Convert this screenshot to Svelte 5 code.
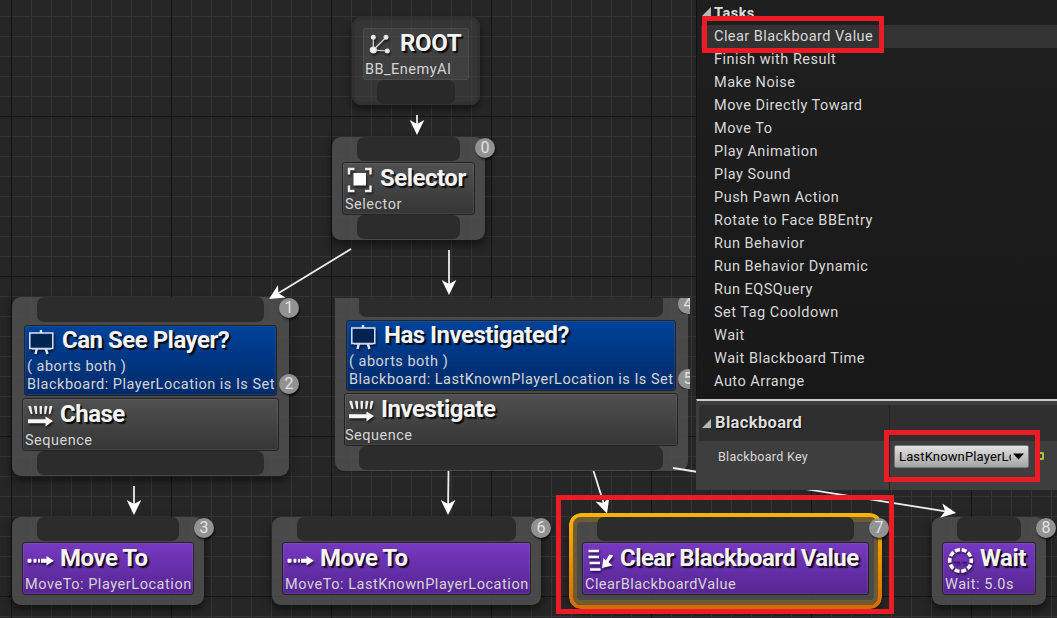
<script>
  const nodes = [
    { kind: 'entry', x: 352, y: 17, w: 128, top: 0, bottom: 24, title: 'ROOT', sub: 'BB_EnemyAI', icon: 'root', badges: [] },
    { kind: 'grey', x: 332, y: 137, w: 153, top: 24, bottom: 24, title: 'Selector', sub: 'Selector', icon: 'selector', badges: [['0', 11]] },
    { kind: 'grey', x: 12, y: 297, w: 277, top: 25, bottom: 24, title: 'Chase', sub: 'Sequence', icon: 'sequence', deco: { title: 'Can See Player?', key: 'PlayerLocation' }, badges: [['1', 11], ['2', 87]] },
    { kind: 'grey cut', x: 335, y: 298, w: 353, top: 19, bottom: 24, title: 'Investigate', sub: 'Sequence', icon: 'sequence', deco: { title: 'Has Investigated?', key: 'LastKnownPlayerLocation' }, badges: [['4', 6], ['5', 81]] },
    { kind: 'task', x: 12, y: 517, w: 192, top: 24, bottom: 0, title: 'Move To', sub: 'MoveTo: PlayerLocation', icon: 'move', badges: [['3', 11]] },
    { kind: 'task', x: 272, y: 517, w: 269, top: 24, bottom: 0, title: 'Move To', sub: 'MoveTo: LastKnownPlayerLocation', icon: 'move', badges: [['6', 11]] },
    { kind: 'task selected', x: 572, y: 517, w: 307, top: 24, bottom: 0, title: 'Clear Blackboard Value', sub: 'ClearBlackboardValue', icon: 'clear', badges: [['7', 11]] },
    { kind: 'task', x: 932, y: 517, w: 114, top: 24, bottom: 0, title: 'Wait', sub: 'Wait: 5.0s', icon: 'wait', badges: [['8', 11]] }
  ];

  const links = [
    [417, 115, 417, 135],
    [351, 249, 269, 299],
    [449, 250, 449, 295],
    [134, 486, 134, 515],
    [448.5, 471, 448, 515],
    [593.5, 471, 607, 513.5],
    [673, 468, 956, 513]
  ];

  const tasks = ['Clear Blackboard Value', 'Finish with Result', 'Make Noise', 'Move Directly Toward', 'Move To', 'Play Animation', 'Play Sound', 'Push Pawn Action', 'Rotate to Face BBEntry', 'Run Behavior', 'Run Behavior Dynamic', 'Run EQSQuery', 'Set Tag Cooldown', 'Wait', 'Wait Blackboard Time', 'Auto Arrange'];

  const frames = [
    [702, 16, 182, 37],
    [884, 430, 156, 52],
    [556, 495, 338, 119]
  ];

  const angle = ([x1, y1, x2, y2]) => (Math.atan2(y2 - y1, x2 - x1) * 180) / Math.PI;
</script>

{#snippet glyph(name)}
  <svg class="glyph" width="28" height="28" viewBox="0 0 28 28">
    {#if name === 'root'}
      <g fill="#f2f2f2" stroke="#e0e0e0" stroke-width="1.2">
        <path d="M8.300 9.300V22L22.300 23M8.300 22L21 9.300" fill="none" />
        <circle cx="8.300" cy="9.300" r="1.900" /><circle cx="21" cy="9.300" r="1.900" />
        <circle cx="8.300" cy="22" r="3" /><circle cx="22.300" cy="23" r="1.900" />
      </g>
    {:else if name === 'selector'}
      <path d="M4 11.500V6H9.500M20 6H25.500V11.500M25.500 22.500V28H20M9.500 28H4V22.500" fill="none" stroke="#eee" stroke-width="2.400" />
      <rect x="8.500" y="10" width="12.500" height="12.500" fill="#fff" />
    {:else if name === 'board'}
      <path d="M15 4V7M11 22L9.500 28M19.500 22L21.500 28" stroke="#dce6f6" stroke-width="2.400" />
      <rect x="3.800" y="7" width="23" height="15.500" fill="#032452" stroke="#dce6f6" stroke-width="1.500" />
      <path d="M6 23H25" stroke="#c2d2ea" stroke-width="1.300" />
    {:else if name === 'sequence'}
      <g fill="#ececec">
        <path d="M3.200 7.500Q4.700 6 6.200 7.500L7.600 14.500Q6.500 16 5.500 14.500Z" />
        <path d="M8.900 7.500Q10.400 6 11.900 7.500L12.300 14.500Q11.300 16 10.300 14.500Z" />
        <path d="M14.400 7.500Q15.700 6 17.100 7.500L16.800 14.500Q15.800 16 14.800 14.500Z" />
        <path d="M19.500 7.500Q21 6 22.400 7.500L21.200 14.500Q20.200 16 19.200 14.500Z" />
        <path d="M24.500 7.500Q26 6 27.500 7.500L25.600 14.500Q24.600 16 23.700 14.500Z" />
      </g>
      <path d="M3 20.300H20.500V17.500L28 22.100L20.500 27.500V24.300H3Z" fill="#f8f8f8" />
    {:else if name === 'move'}
      <g fill="#fff">
        <rect x="2.500" y="15.800" width="4" height="4" rx="1" /><rect x="8.500" y="15.800" width="3" height="4" rx="1" /><rect x="13" y="15.800" width="2" height="4" rx="1" />
        <path d="M16 15.800H21.500V13L28.800 17.800L21.500 22.600V19.800H16Z" />
      </g>
    {:else if name === 'clear'}
      <path d="M3.500 8H14M3.500 14H14M4.500 20H15M5 26.500H15.500" stroke="#fff" stroke-width="2.300" />
      <path d="M24.500 11.500L28.200 12.500L23.500 19L27.500 22.500L17 25L18.500 15L20.800 17.500Z" fill="#fff" />
    {:else}
      <path d="M9 19.500H15M17.500 19.500H22" stroke="#341066" stroke-width="1.500" />
      <circle cx="15.500" cy="17.500" r="10.800" fill="none" stroke="#fff" stroke-width="3.600" stroke-dasharray="5 1.786" stroke-dashoffset="2.500" />
    {/if}
  </svg>
{/snippet}

<main>
  {#each nodes as n}
    <section class="node {n.kind}" style="left:{n.x}px;top:{n.y}px;width:{n.w}px">
      <div class="pin top" style="height:{n.top}px"></div>
      {#if n.deco}
        <div class="card deco">
          <div class="head">{@render glyph('board')}<h2>{n.deco.title}</h2></div>
          <p>( aborts both )</p>
          <p class="key">Blackboard: {n.deco.key} is Is Set</p>
        </div>
      {/if}
      <div class="card body">
        <div class="head">{@render glyph(n.icon)}<h2>{n.title}</h2></div>
        <p class="sub">{n.sub}</p>
      </div>
      <div class="pin bottom" style="height:{n.bottom}px"></div>
      {#each n.badges as [num, cy]}
        <span class="badge" style="top:{cy - 10}px">{num}</span>
      {/each}
    </section>
  {/each}

  <svg class="links" width="1057" height="618">
    {#each links as l}
      <line x1={l[0]} y1={l[1]} x2={l[2] - Math.cos((angle(l) * Math.PI) / 180) * 9} y2={l[3] - Math.sin((angle(l) * Math.PI) / 180) * 9} />
      <path d="M0 0L-15 7.300L-11 0L-15 -7.300Z" transform="translate({l[2]} {l[3]}) rotate({angle(l)})" />
    {/each}
  </svg>

  <aside>
    <div class="menu">
      <h3 class="tasks"><i></i>Tasks</h3>
      <ul>
        {#each tasks as t, k}
          <li class:active={k === 0}>{t}</li>
        {/each}
      </ul>
    </div>
    <div class="details">
      <div class="cat"><h3><i></i>Blackboard</h3><span></span></div>
      <div class="prop">
        <label for="bbkey">Blackboard Key</label>
        <div class="value"><button id="bbkey"><span>LastKnownPlayerLocation</span><svg width="11" height="7"><path d="M0 0.500H11L5.500 6.500Z" /></svg></button><b></b></div>
      </div>
    </div>
  </aside>

  {#each frames as [x, y, w, h]}
    <div class="frame" style="left:{x}px;top:{y}px;width:{w}px;height:{h}px"></div>
  {/each}
</main>

<style>
  :global(body) { margin: 0; overflow: hidden; }
  * { box-sizing: border-box; }
  h2, h3, p, ul { margin: 0; padding: 0; }
  main {
    position: relative; width: 1057px; height: 618px; overflow: hidden;
    font-family: Roboto, "Liberation Sans", sans-serif; color: #d8d8d8;
    display: flex; justify-content: flex-end; align-items: flex-start;
    background-color: #262626;
    background-image:
      linear-gradient(90deg, #141414 1px, transparent 1px), linear-gradient(#141414 1px, transparent 1px),
      linear-gradient(90deg, #353535 1px, transparent 1px), linear-gradient(#353535 1px, transparent 1px);
    background-size: 160px 160px, 160px 160px, 20px 20px, 20px 20px;
    background-position: 11px 0, 0 116px, 11px 0, 0 16px;
  }
  .node {
    position: absolute; display: flex; flex-direction: column; padding: 0 10px;
    border-radius: 9px; background: rgba(80, 80, 80, .84);
    box-shadow: 0 4px 8px 1px rgba(0, 0, 0, .5);
  }
  .pin { background: #2c2c2c; border-radius: 7px; margin: 0 15px; flex: none; }
  .pin.bottom { margin-bottom: 1px; }
  .card {
    border: 1px solid #232323; border-radius: 3px; flex: none;
    box-shadow: inset 0 0 0 1px rgba(255, 255, 255, .07);
  }
  .body { height: 53px; margin-top: 1px; background: linear-gradient(#505050, #363636); padding: 0 2px; }
  .task .body { background: linear-gradient(#7639c2, #562591); }
  .task { height: 88px; }
  .deco { height: 71px; margin: 3px 2px 0 2px; background: linear-gradient(#00429a, #002a69); padding: 0 1px 0 2px; }
  .deco h2 { line-height: 29px; margin-left: 8px; }
  .deco .glyph { margin-left: -1px; }
  .deco + .body { margin-top: 2px; }
  .cut { border-radius: 0 0 9px 9px; padding: 0 10px 0 9px; box-shadow: 0 1px 2px rgba(0, 0, 0, .25); }
  .cut .top { border-radius: 0 0 7px 7px; }
  .cut .body { padding-left: 1px; }
  .cut .sub { left: -1px; }
  .cut .badge { clip-path: inset(0 8px 0 0); }
  .cut .badge:nth-last-child(2) { clip-path: inset(4px 8px 0 0); }
  .entry { padding: 11px 11px 0; height: 88px; background: rgba(65, 65, 65, .55); box-shadow: inset 0 0 0 3px rgba(40, 40, 40, .35), 0 4px 8px rgba(0, 0, 0, .5); }
  .entry .top { display: none; }
  .entry .body { margin: 0; border: 0; height: 52px; background: rgba(80, 80, 80, .4); }
  .entry .pin { background: rgba(40, 40, 40, .9); margin: 0 14px; }
  .entry h2 { letter-spacing: -.3px; }
  .selected { box-shadow: inset 0 0 0 5px rgba(143, 104, 30, .55), 0 5px 9px #000; }
  .selected::before {
    content: ""; position: absolute; inset: -4px -3px; border-radius: 12px; padding: 4px;
    background: linear-gradient(#f7b500, #d66b00);
    mask: linear-gradient(#000 0 0) content-box exclude, linear-gradient(#000 0 0);
  }
  .selected h2 { letter-spacing: -.57px; }
  .head { display: flex; height: 31px; }
  .glyph { flex: none; overflow: visible; filter: drop-shadow(1px 2px 1px rgba(0, 0, 0, .6)); }
  h2 {
    margin-left: 7px; font-size: 24px; line-height: 31px; font-weight: 700; color: #f3f3f3; white-space: nowrap;
    text-shadow: 2px 2px 1px rgba(0, 0, 0, .85); letter-spacing: -.5px;
  }
  p { position: relative; top: 1px; font-size: 14.500px; line-height: 18px; white-space: nowrap; color: #d5d5d5; letter-spacing: .5px; }
  .sub { margin-top: 1px; }
  .task .sub { letter-spacing: .55px; }
  .selected .sub { letter-spacing: .45px; }
  .badge {
    position: absolute; right: -10px; width: 20px; height: 20px; border-radius: 50%; background: #929292;
    box-shadow: 1px 2px 2px rgba(0, 0, 0, .6); color: #e2e2e2; text-align: center; font-size: 16px; line-height: 20px;
  }
  .links { position: absolute; left: 0; top: 0; }
  .links line { stroke: #eee; stroke-width: 1.800; }
  .links path { fill: #fff; }
  aside { position: relative; width: 361px; }
  .menu { height: 399px; background: linear-gradient(#1f1f1f, #181818); border-left: 1px solid #111; padding: 5px 0 0 4px; }
  h3 { display: flex; color: #ddd; white-space: nowrap; }
  i { width: 9px; height: 9px; background: #b8b8b8; clip-path: polygon(100% 0, 100% 100%, 0 100%); flex: none; }
  .tasks { height: 20px; font-size: 14.500px; line-height: 18px; letter-spacing: .5px; }
  .tasks i { margin: 2px 3px 0 1px; }
  ul { list-style: none; }
  li { height: 23px; padding-left: 13px; line-height: 23px; font-size: 14.500px; letter-spacing: .5px; white-space: nowrap; }
  .active { background: #333; letter-spacing: .45px; }
  .details { height: 91px; background: #3e3e3e; border-top: 2px solid #cfc9cd; padding: 4px 0 0 2px; border-left: 1px solid #3e3e3e; }
  .cat { display: flex; height: 36px; background: #2f2f2f; border-radius: 4px 0 0 0; }
  .cat h3 { width: 190px; font-size: 16.500px; line-height: 35px; letter-spacing: .35px; text-shadow: 1px 1px 1px #000; }
  .cat i { margin: 14px 4px 0 3px; }
  .cat span, .value { flex: 1; border-left: 1px solid #242424; }
  .prop { display: flex; height: 49px; }
  label { width: 190px; padding-left: 19px; font-size: 12.500px; line-height: 31px; letter-spacing: .3px; }
  .value { display: flex; padding: 4px 0 0 4px; }
  button {
    width: 135px; height: 23px; border: 1px solid #777; border-radius: 2px; display: flex; align-items: center; padding: 0 4px;
    background: linear-gradient(#e2e2e2, #a5a5a5); font: 13px Roboto, sans-serif; letter-spacing: .15px; color: #000; gap: 2px;
  }
  button span { width: 112px; overflow: hidden; white-space: nowrap; text-align: left; }
  button svg { flex: none; }
  .value b { width: 6px; height: 8px; margin: 7px 0 0 9px; border: 2px solid #aabd35; border-radius: 1px; }
  .frame { position: absolute; border: 5px solid #ed1c24; }
</style>
